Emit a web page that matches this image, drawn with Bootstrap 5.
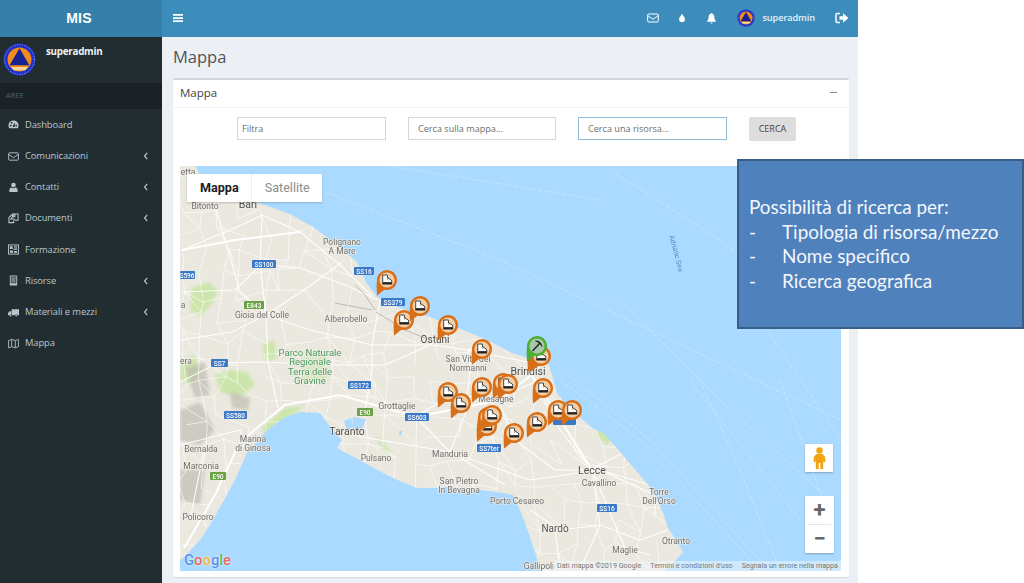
<!DOCTYPE html>
<html lang="it">
<head>
<meta charset="utf-8">
<title>MIS - Mappa</title>
<link href="https://cdn.jsdelivr.net/npm/bootstrap@5.3.0/dist/css/bootstrap.min.css" rel="stylesheet">
<style>
html,body{height:100%;overflow:hidden;background:#fff;}
body{font-family:"Open Sans","Noto Sans",sans-serif;font-size:10px;color:#444;}
.app-frame{width:858px;height:583px;overflow:hidden;}
.top-bar{height:36.5px;background:#3c8dbc;color:#fff;padding:0;flex-wrap:nowrap;}
.brand-box{width:162px;height:100%;background:#367fa9;font:700 14px "Liberation Sans",sans-serif;letter-spacing:.2px;padding-right:4px;}
.toggle-ico{margin-left:11px;}
.top-tools{padding-right:9px;}
.tool-mail{margin-right:18px;}
.tool-drop{margin-right:18.5px;}
.tool-bell{margin-right:20.5px;}
.top-user{font-size:9.2px;font-weight:600;color:#e4f0f7;margin:0 20px 0 7px;letter-spacing:-.1px;}
.side-panel{width:162px;flex:none;background:#222d32;color:#b8c7ce;height:546.5px;}
.user-box{height:46px;padding:6px 3px;gap:10px;}
.user-name{font-size:9.8px;font-weight:700;color:#eef2f3;margin-top:2px;letter-spacing:-.25px;}
.area-head{height:26px;background:#1a2226;color:#4b646f;font-size:7.5px;padding:0 6px;}
.side-link{height:31.2px;padding:0 8px;color:#b8c7ce;font-size:9.4px;gap:6px;letter-spacing:-.1px;}
.side-link:hover,.side-link:focus{color:#fff;}
.side-link svg.ico{width:11px;height:11px;flex:none;}
.nav-list{padding-top:.8px;}
.chev{margin-right:5px;}
.main-area{background:#ecf0f5;width:696px;height:546.5px;padding:0 9px 0 11px;}
.page-title{font-size:16.5px;font-weight:400;color:#4f5557;margin:0;padding-top:9px;height:41.5px;line-height:22px;}
.map-box{border:0;border-top:2.5px solid #d2d6de;border-radius:2px;height:499px;box-shadow:0 1px 1px rgba(0,0,0,.1);}
.map-box .card-header{background:#fff;height:28px;padding:0 7px 2px;border-bottom:1px solid #f4f4f4;font-size:11.5px;color:#444;}
.map-box .card-body{padding:9px 7px 0;}
.collapse-mark{width:7px;height:1.6px;background:#888;margin-right:5px;}
.filter-row{padding-left:57px;gap:22px;height:49px;}
.filter-row .form-control{width:149px;height:23px;border-radius:0;border:1px solid #d2d6de;padding:0 4px;font-size:9.1px;box-shadow:none;color:#555;}
.filter-row .form-control::placeholder{color:#6e6e6e;opacity:1;}
.filter-row .wide-pad{padding-left:9px;}
.filter-row .mid-field{width:148px;}
.filter-row .active-field{border:1.5px solid #8fbcd8;}
.search-btn{width:47px;height:24px;padding:0;border-radius:2px;background:#ddd;border:1px solid #ddd;font-size:9px;color:#444;}
.map-canvas{position:relative;width:661px;height:405px;overflow:hidden;background:#aadaff;}
.map-art{position:absolute;left:0;top:0;width:661px;height:405px;filter:blur(.35px);}
.map-art text{font-family:Roboto,"Liberation Sans",sans-serif;font-size:8.5px;fill:#707070;text-anchor:middle;paint-order:stroke;stroke:#f2efe9;stroke-width:1.2px;}
.map-art text.big{font-size:10.5px;fill:#4d4d4d;}
.map-art text.park{fill:#4a9a5c;font-size:9.5px;}
.map-art text.sh{font-size:6.5px;fill:#fff;stroke:none;font-weight:500;}
.map-art text.seaname{font-size:7px;fill:#5c8cc5;stroke:none;}
.type-switch{position:absolute;left:7px;top:8px;height:28px;background:#fff;font:500 12.6px Roboto,sans-serif;box-shadow:0 1px 2px rgba(0,0,0,.2);}
.type-switch span{padding:0 12px 0 13px;line-height:28px;color:#8b8b8b;font-weight:400;}
.type-switch .is-on{color:#222;font-weight:700;border-right:1px solid #eee;}
.ctl-box{position:absolute;background:#fff;box-shadow:0 1px 2px rgba(0,0,0,.25);border-radius:1px;}
.peg-ctl{left:625px;top:278px;width:28px;height:28px;}
.zoom-ctl{left:625px;top:330px;width:29px;height:57px;}
.zoom-sep{height:1px;background:#e6e6e6;margin:0 3px;}
.zoom-key{height:28px;font:700 22px/28px Roboto,sans-serif;color:#666;}
.g-logo{position:absolute;left:4px;top:385px;font:500 14.8px Roboto,sans-serif;line-height:18px;text-shadow:0 0 2px #fff;}
.attrib{position:absolute;right:0;bottom:0;height:10px;font:7.15px/10px Roboto,sans-serif;color:#777;background:rgba(240,245,250,.55);white-space:nowrap;gap:9px;padding:0 3px 0 4px;}
.note-callout{position:absolute;left:737px;top:159px;width:287px;height:170px;background:#4f81bd;border:2px solid #385d8a;color:#f4f7fb;font:18.9px/24.7px Lato,"Open Sans",sans-serif;padding:34px 4px 0 10px;white-space:nowrap;}
.note-callout .dash{display:inline-block;width:33px;}
</style>
</head>
<body>
<svg width="0" height="0" class="position-absolute">
  <defs>
    <symbol id="i-dash" viewBox="0 0 12 12"><path d="M6 1.500A5.500 5.500 0 0 0 .5 7c0 1.200.3 2.300.9 3.200h9.200c.6-.9.9-2 .9-3.200A5.500 5.500 0 0 0 6 1.500zm-3 6.700a1 1 0 1 1 0-2 1 1 0 0 1 0 2zm1-3a1 1 0 1 1 0-2 1 1 0 0 1 0 2zm2.600 3.600a1.100 1.100 0 0 1-1.200-1.700L7.600 4l-.2 3.500c.2.2.3.5.2.8zM9 8.200a1 1 0 1 1 0-2 1 1 0 0 1 0 2z" fill="currentColor" fill-rule="evenodd"/></symbol>
    <symbol id="i-mail" viewBox="0 0 12 12"><rect x=".7" y="2" width="10.600" height="8" rx="1" fill="none" stroke="currentColor" stroke-width="1"/><path d="M1 3.800 6 7.300l5-3.500" fill="none" stroke="currentColor" stroke-width="1"/></symbol>
    <symbol id="i-user" viewBox="0 0 12 12"><circle cx="6" cy="3.300" r="2.500" fill="currentColor"/><path d="M1.500 11c-.4-3 .8-5 2.500-5 .6.500 1.300.8 2 .8s1.400-.3 2-.8c1.700 0 2.900 2 2.500 5z" fill="currentColor"/></symbol>
    <symbol id="i-docs" viewBox="0 0 12 12"><path d="M4.800 1.200 1 5v5.500h5.200V8" fill="none" stroke="currentColor" stroke-width="1.100"/><path d="M7.500 1H4.800v3.500L3 6.500h3.500L8 8h3V1zM5.500 3.500 7.500 1.500V4H5.500z" fill="none" stroke="currentColor" stroke-width="1.100"/></symbol>
    <symbol id="i-news" viewBox="0 0 12 12"><rect x=".5" y="1" width="11" height="10" fill="none" stroke="currentColor"/><path d="M2 2.500h3v3H2zM6.500 2.500h3.500v1.200H6.500zM6 5h4v1.200H6zM2 7h3.500v2.500H2zM6.500 7.500H10v2H6.500z" fill="currentColor"/></symbol>
    <symbol id="i-tablet" viewBox="0 0 12 12"><rect x="2" y=".5" width="8" height="11" rx="1" fill="currentColor"/><rect x="3" y="1.600" width="6" height="7.400" fill="#222d32"/><rect x="3.700" y="2.300" width="4.600" height="6" fill="currentColor" opacity=".55"/></symbol>
    <symbol id="i-truck" viewBox="0 0 12 12"><path d="M4 2.500h8v6.500H4zM3.500 4.500H1.700L0 6.500V9h3.500z" fill="currentColor"/><circle cx="2.600" cy="9.500" r="1.200" fill="currentColor" stroke="#222d32" stroke-width=".6"/><circle cx="9" cy="9.500" r="1.200" fill="currentColor" stroke="#222d32" stroke-width=".6"/></symbol>
    <symbol id="i-map" viewBox="0 0 12 12"><path d="M.6 2.800 4 1.500l4 1.300 3.400-1.300v8L8 10.700 4 9.500.6 10.800zM4 1.500v8M8 2.800v7.900" fill="none" stroke="currentColor" stroke-width=".9"/></symbol>
    <symbol id="i-left" viewBox="0 0 6 10"><path d="M4.500 1 1.200 5l3.300 4" fill="none" stroke="currentColor" stroke-width="1.500"/></symbol>
    <symbol id="i-drop" viewBox="0 0 12 12"><path d="M6 .8C5 3 2.500 5 2.500 7.500a3.500 3.500 0 0 0 7 0C9.500 5 7 3 6 .8z" fill="currentColor"/></symbol>
    <symbol id="i-bell" viewBox="0 0 12 12"><path d="M6 .5c.5 0 .8.400.8.900 1.800.4 2.300 2 2.300 3.600 0 2 .6 3.300 1.600 4.200v.8H1.300v-.8c1-.9 1.600-2.200 1.600-4.200 0-1.600.5-3.200 2.300-3.600 0-.5.300-.9.800-.9zM4.800 10.800h2.400A1.200 1.200 0 0 1 6 12a1.200 1.200 0 0 1-1.200-1.200z" fill="currentColor"/></symbol>
    <symbol id="i-out" viewBox="0 0 14 12"><path d="M5 1.500H2.500A1.500 1.500 0 0 0 1 3v6a1.500 1.500 0 0 0 1.500 1.500H5" fill="none" stroke="currentColor" stroke-width="1.500"/><path d="M4.500 4.300H8V1.200L13.500 6 8 10.800V7.700H4.500z" fill="currentColor"/></symbol>
    <symbol id="i-bars" viewBox="0 0 10 10"><path d="M0 1h10v1.700H0zM0 4.200h10v1.700H0zM0 7.300h10V9H0z" fill="currentColor"/></symbol>
    <symbol id="logo" viewBox="0 0 40 40">
      <circle cx="20" cy="20" r="19.500" fill="#1d2fc4"/>
      <circle cx="20" cy="20" r="18" fill="none" stroke="#9fb0ea" stroke-width="1" stroke-dasharray="1.500 1.500"/>
      <circle cx="20" cy="20" r="14.500" fill="#f48a1e"/>
      <path d="M20 6.500 32 27H8z" fill="#17218f"/>
      <path d="M10 29h20l-3 4H13z" fill="#f6d9a0"/>
    </symbol>
    <g id="pin">
      <path d="M-10 15.500C-10.500 9-10.500 4-10 0A10 10 0 1 1-2.500 9.700C-5.500 11.500-7.500 14-10 15.500z" fill="#d8701a"/>
      <circle r="7.600" fill="#f2cfa6"/>
      <path d="M-4.300-5H.3l.4 2.900C2-1 4.400-.6 4.800 1V2.600H-4.300z" fill="#fff" stroke="#333" stroke-width=".9"/>
      <path d="M0-2.800 1.600-1.800M-.2-1.400 1-.6" stroke="#333" stroke-width=".6"/>
      <rect x="-4.800" y="2.500" width="10" height="1.900" rx=".4" fill="#222"/>
    </g>
    <g id="pin-green">
      <path d="M-10 15.500C-10.500 9-10.500 4-10 0A10 10 0 1 1-2.500 9.700C-5.500 11.500-7.500 14-10 15.500z" fill="#4caf33"/>
      <circle r="7.600" fill="#a7c9a9"/>
      <path d="M-4.500 5 3 -3" stroke="#222" stroke-width="1.400"/>
      <path d="M-1.500-5C1.500-5.500 4.500-3.500 5 .5 3.500-2 1.500-4-1.500-5z" fill="#222" stroke="#222" stroke-width=".7"/>
    </g>
    <clipPath id="land-clip"><path d="M180 166H196L205 190 240 198 262 204 290 214 313 227 336 244 357 262 366 282 377 297 400 308 430 317 456 327 480 337 493 343 510 352 527 358 547 360 552 375 557 393 566 405 580 417 592 428 603 433 616 447 627 460 638 473 650 487 657 500 663 513 668 528 676 540 683 552 675 561 665 571H540L536 555 530 537 524 520 519 508 513 495 497 492 480 490 465 489 447 487 430 488 417 488 402 482 387 475 372 467 360 460 348 454 337 448 342 440 335 433 331 428 320 413 300 412 285 417 267 430 247 453 235 480 224 500 213 520 200 540 186 555 180 560z"/></clipPath>
    <filter id="soft" x="-20%" y="-20%" width="140%" height="140%"><feGaussianBlur stdDeviation="1.800"/></filter>
  </defs>
</svg>

<div class="app-frame d-flex flex-column">
  <header class="navbar top-bar align-items-stretch">
    <div class="brand-box d-flex align-items-center justify-content-center">MIS</div>
    <svg class="toggle-ico align-self-center" width="10" height="10"><use href="#i-bars"/></svg>
    <div class="top-tools ms-auto d-flex align-items-center">
      <svg width="12" height="12" class="tool-mail"><use href="#i-mail"/></svg>
      <svg width="10" height="10" class="tool-drop"><use href="#i-drop"/></svg>
      <svg width="11" height="12" class="tool-bell"><use href="#i-bell"/></svg>
      <svg width="18" height="18"><use href="#logo"/></svg>
      <span class="top-user">superadmin</span>
      <svg width="14" height="12"><use href="#i-out"/></svg>
    </div>
  </header>
  <div class="d-flex flex-grow-1">
    <aside class="side-panel">
      <div class="user-box d-flex">
        <svg width="33" height="33"><use href="#logo"/></svg>
        <div class="user-name">superadmin</div>
      </div>
      <div class="area-head d-flex align-items-center">AREE</div>
      <nav class="nav flex-column nav-list">
        <a class="nav-link side-link d-flex align-items-center" href="#"><svg class="ico"><use href="#i-dash"/></svg>Dashboard</a>
        <a class="nav-link side-link d-flex align-items-center" href="#"><svg class="ico"><use href="#i-mail"/></svg>Comunicazioni<svg class="ms-auto chev" width="6" height="8"><use href="#i-left"/></svg></a>
        <a class="nav-link side-link d-flex align-items-center" href="#"><svg class="ico"><use href="#i-user"/></svg>Contatti<svg class="ms-auto chev" width="6" height="8"><use href="#i-left"/></svg></a>
        <a class="nav-link side-link d-flex align-items-center" href="#"><svg class="ico"><use href="#i-docs"/></svg>Documenti<svg class="ms-auto chev" width="6" height="8"><use href="#i-left"/></svg></a>
        <a class="nav-link side-link d-flex align-items-center" href="#"><svg class="ico"><use href="#i-news"/></svg>Formazione</a>
        <a class="nav-link side-link d-flex align-items-center" href="#"><svg class="ico"><use href="#i-tablet"/></svg>Risorse<svg class="ms-auto chev" width="6" height="8"><use href="#i-left"/></svg></a>
        <a class="nav-link side-link d-flex align-items-center" href="#"><svg class="ico"><use href="#i-truck"/></svg>Materiali e mezzi<svg class="ms-auto chev" width="6" height="8"><use href="#i-left"/></svg></a>
        <a class="nav-link side-link d-flex align-items-center" href="#"><svg class="ico"><use href="#i-map"/></svg>Mappa</a>
      </nav>
    </aside>
    <main class="main-area">
      <h1 class="page-title">Mappa</h1>
      <section class="card map-box">
        <div class="card-header d-flex align-items-center justify-content-between">
          <span>Mappa</span><span class="collapse-mark"></span>
        </div>
        <div class="card-body">
          <form class="filter-row d-flex align-items-start">
            <input class="form-control" type="text" placeholder="Filtra">
            <input class="form-control wide-pad mid-field" type="text" placeholder="Cerca sulla mappa...">
            <input class="form-control wide-pad active-field" type="text" placeholder="Cerca una risorsa...">
            <button class="btn search-btn" type="button">CERCA</button>
          </form>
          <div class="map-canvas">
            <svg class="map-art" viewBox="180 166 661 405">
              <rect x="180" y="166" width="661" height="405" fill="#aadaff"/>
              <g fill="none" stroke="#c6e6ff" stroke-width=".9" stroke-dasharray="4 2">
                <path d="M320 190 500 260 841 420"/><path d="M560 380 640 440 760 570"/><path d="M568 375 650 440 770 571"/>
                <path d="M690 380 800 520"/><path d="M700 380 740 470 780 571"/><path d="M740 290 841 440"/><path d="M610 170 720 240 841 330"/>
                <path d="M620 300 720 400 830 500"/><path d="M390 166 600 200"/><path d="M780 380 830 520"/>
              </g>
              <rect x="180" y="166" width="661" height="405" fill="#ebe8df" clip-path="url(#land-clip)"/>
              <g clip-path="url(#land-clip)">
                <g fill="#cbe5a8" filter="url(#soft)" opacity=".95">
                  <path d="M192 288 208 282 218 290 212 304 200 316 190 310z"/><path d="M262 345 274 340 277 358 266 362z"/>
                  <path d="M215 375 230 370 248 372 255 385 240 397 220 392z"/><path d="M182 360 195 355 200 375 190 385 180 380z"/>
                  <path d="M262 428 285 408 305 406 285 420 266 436z"/>
                  <path d="M375 432 385 445 392 455 382 450z"/><path d="M597 428 612 435 608 445 598 437z"/>
                  <path d="M300 358 325 355 330 380 300 385z" opacity=".5"/>
                </g>
                <g fill="#b9b6ad" filter="url(#soft)" opacity=".6">
                  <path d="M185 368 205 362 210 395 195 398z"/><path d="M180 410 200 402 215 430 200 445 180 440z"/><path d="M180 470 205 470 200 505 180 500z"/>
                  <path d="M230 392 250 398 248 410 232 408z"/>
                </g>
                <g id="road-mesh" fill="none" stroke="#fff" stroke-width=".75" opacity=".8"></g>
                <g fill="none" stroke="#fff" stroke-width="1.100" stroke-linejoin="round" opacity=".95">
                  <path d="M182 250 235 228 262 215 300 232 340 265 372 296"/>
                  <path d="M182 292 235 290 262 264 300 268 345 285 378 300"/>
                  <path d="M262 215 260 264 266 315 268 362 278 408"/>
                  <path d="M214 203 228 250 240 292 266 315 310 330 372 345 435 345 468 350 527 362"/>
                  <path d="M180 340 232 332 266 315 310 286 342 262"/>
                  <path d="M180 382 218 363 266 362 330 365 385 365 430 345 470 320"/>
                  <path d="M365 412 372 370 372 345 380 300"/>
                  <path d="M416 417 448 450 505 485"/><path d="M340 432 368 438 450 452 530 480 600 470 650 485"/>
                  <path d="M450 452 465 415 470 370 468 350 490 342"/>
                  <path d="M500 405 515 440 555 470 590 470 625 452"/><path d="M530 372 560 430 592 470 625 548 650 555"/>
                  <path d="M530 510 560 530 600 525 640 540 668 530"/><path d="M592 470 600 525 580 570"/><path d="M600 470 655 495 655 515"/><path d="M555 529 560 570"/>
                  <path d="M540 380 497 398 452 395 415 417"/><path d="M180 445 240 430 245 448"/><path d="M205 445 190 520"/>
                </g>
                <g stroke="#fff" stroke-width="1.900" fill="none"><path d="M184 548 215 495 240 442 285 405 340 395 416 417 500 400 535 372"/><path d="M530 372 592 470"/><path d="M182 250 235 240 300 232"/></g>
                <g fill="none" stroke="#8d8b84" stroke-width=".7" opacity=".7"><path d="M355 285 365 295 375 310"/><path d="M335 303 372 310"/><path d="M376 312 405 330 425 338"/></g>
              </g>
              <g fill="#aadaff"><path d="M344 421 351 418 353 426 347 431z"/><path d="M353 417 366 419 362 429 352 428z"/><path d="M399 432 402 430 402 435 399 435z"/><path d="M321 433 326 431 324 437z"/></g>

              <g>
                <text x="188" y="175">etta</text>
                <text x="205" y="209">Bitonto</text><text class="big" x="248" y="208">Bari</text>
                <text x="342" y="245">Polignano</text><text x="342" y="254">A Mare</text>
                <text x="346" y="322">Alberobello</text><text x="262" y="318">Gioia del Colle</text>
                <text class="big" x="435" y="343" style="font-size:10px">Ostuni</text>
                <text x="468" y="362">San Vito dei</text><text x="468" y="371">Normanni</text>
                <text class="park" x="310" y="356">Parco Naturale</text><text class="park" x="310" y="365">Regionale</text><text class="park" x="310" y="375">Terra delle</text><text class="park" x="310" y="384">Gravine</text>
                <text x="397" y="409">Grottaglie</text><text x="496" y="402">Mesagne</text>
                <text class="big" x="528" y="375">Brindisi</text>
                <text class="big" x="347" y="435">Taranto</text>
                <text x="376" y="461">Pulsano</text><text x="450" y="457">Manduria</text>
                <text x="459" y="484">San Pietro</text><text x="459" y="493">In Bevagna</text>
                <text x="253" y="442">Marina</text><text x="253" y="451">di Ginosa</text>
                <text x="201" y="452">Bernalda</text><text x="201" y="469">Marconia</text>
                <text x="198" y="520">Policoro</text><text x="517" y="504">Porto Cesareo</text>
                <text class="big" x="592" y="474">Lecce</text><text x="599" y="486">Cavallino</text>
                <text x="659" y="495">Torre</text><text x="659" y="504">Dell'Orso</text>
                <text x="555" y="532" style="font-size:10px;fill:#555">Nardò</text><text x="625" y="553">Maglie</text><text x="676" y="544">Otranto</text>
                <text x="539" y="568.500">Gallipoli</text><text x="186" y="364">era</text><text x="183" y="308">a</text>
                <text class="seaname" x="0" y="0" transform="translate(674 254) rotate(75)">Adriatic Sea</text>
              </g>
              <g fill="#3a78c8">
                <rect x="252" y="260" width="24" height="8" rx="1"/><rect x="180" y="271" width="15" height="8" rx="1"/>
                <rect x="211" y="359" width="17" height="8" rx="1"/><rect x="348" y="381" width="23" height="8" rx="1"/>
                <rect x="224" y="411" width="23" height="8" rx="1"/><rect x="405" y="413" width="24" height="8" rx="1"/>
                <rect x="354" y="267" width="20" height="8" rx="1"/><rect x="381" y="298" width="24" height="8" rx="1"/>
                <rect x="477" y="444" width="24" height="8" rx="1"/><rect x="597" y="504" width="20" height="8" rx="1"/><rect x="553" y="417" width="23" height="8" rx="1"/>
              </g>
              <g fill="#68a244"><rect x="244" y="301" width="20" height="8" rx="1"/><rect x="357" y="408" width="16" height="8" rx="1"/><rect x="210" y="472" width="16" height="8" rx="1"/></g>
              <g>
                <text class="sh" x="264" y="266.500">SS100</text><text class="sh" x="187" y="277.500">S596</text><text class="sh" x="219.500" y="365.500">SS7</text>
                <text class="sh" x="359.500" y="387.500">SS172</text><text class="sh" x="235.500" y="417.500">SS580</text><text class="sh" x="417" y="419.500">SS603</text>
                <text class="sh" x="364" y="273.500">SS16</text><text class="sh" x="393" y="304.500">SS379</text><text class="sh" x="489" y="450.500">SS7ter</text><text class="sh" x="607" y="510.500">SS16</text>
                <text class="sh" x="254" y="307.500">E843</text><text class="sh" x="365" y="414.500">E90</text><text class="sh" x="218" y="478.500">E90</text>
              </g>
              <g>
                <use href="#pin" x="387" y="280"/><use href="#pin" x="404" y="320"/><use href="#pin" x="420" y="306"/><use href="#pin" x="448" y="325"/>
                <use href="#pin" x="482" y="349"/><use href="#pin" x="448" y="392"/><use href="#pin" x="461" y="403"/><use href="#pin" x="482" y="387"/>
                <use href="#pin" x="503" y="383"/><use href="#pin" x="508" y="384"/><use href="#pin" x="538" y="356"/><use href="#pin" x="541" y="356"/>
                <use href="#pin" x="543" y="388"/><use href="#pin" x="487" y="426"/><use href="#pin" x="488" y="417"/><use href="#pin" x="492" y="415"/>
                <use href="#pin" x="514" y="433"/><use href="#pin" x="537" y="422"/><use href="#pin" x="558" y="410"/><use href="#pin" x="572" y="410"/>
                <use href="#pin-green" x="537" y="346"/>
              </g>
            </svg>
            <div class="type-switch d-flex">
              <span class="is-on">Mappa</span><span>Satellite</span>
            </div>
            <div class="ctl-box peg-ctl d-flex align-items-center justify-content-center">
              <svg width="13" height="22" viewBox="0 0 13 22"><circle cx="6.500" cy="3.500" r="3.200" fill="#f2a413"/><path d="M3.500 7h6l2.500 2.500L12.500 15h-2l-.3-3v10H7.300v-6H5.700v6H2.800V12l-.3 3h-2L1 9.500z" fill="#f2a413"/></svg>
            </div>
            <div class="ctl-box zoom-ctl text-center">
              <div class="zoom-key">+</div><div class="zoom-sep"></div><div class="zoom-key">−</div>
            </div>
            <div class="g-logo"><span style="color:#5b8fe8">G</span><span style="color:#e8685b">o</span><span style="color:#f4b63f">o</span><span style="color:#5b8fe8">g</span><span style="color:#5cb860">l</span><span style="color:#e8685b">e</span></div>
            <div class="attrib d-flex"><span>Dati mappa ©2019 Google</span><span>Termini e condizioni d'uso</span><span>Segnala un errore nella mappa</span></div>
          </div>
        </div>
      </section>
    </main>
  </div>
</div>

<aside class="note-callout">
  <div>Possibilità di ricerca per:</div>
  <div><span class="dash">-</span>Tipologia di risorsa/mezzo</div>
  <div><span class="dash">-</span>Nome specifico</div>
  <div><span class="dash">-</span>Ricerca geografica</div>
</aside>
<script src="https://cdn.jsdelivr.net/npm/bootstrap@5.3.0/dist/js/bootstrap.bundle.min.js"></script>
<script>
// Minor-road mesh of the map: a jittered grid, seeded so each run draws the same network.
(function(){
  var seed=7;function rnd(){seed=(seed*16807)%2147483647;return seed/2147483647;}
  var step=21,pts=[],cols=25,rows=20,c,r;
  for(c=0;c<cols;c++){pts[c]=[];for(r=0;r<rows;r++){pts[c][r]=[180+c*step+(rnd()-.5)*15,170+r*step+(rnd()-.5)*15];}}
  var d="";
  function seg(a,b){d+="M"+a[0].toFixed(1)+" "+a[1].toFixed(1)+"L"+b[0].toFixed(1)+" "+b[1].toFixed(1);}
  for(c=0;c<cols;c++){for(r=0;r<rows;r++){
    if(c<cols-1&&rnd()<.72)seg(pts[c][r],pts[c+1][r]);
    if(r<rows-1&&rnd()<.72)seg(pts[c][r],pts[c][r+1]);
    if(c<cols-1&&r<rows-1&&rnd()<.22)seg(pts[c][r],pts[c+1][r+1]);
  }}
  var p=document.createElementNS("http://www.w3.org/2000/svg","path");
  p.setAttribute("d",d);document.getElementById("road-mesh").appendChild(p);
})();
</script>
</body>
</html>
